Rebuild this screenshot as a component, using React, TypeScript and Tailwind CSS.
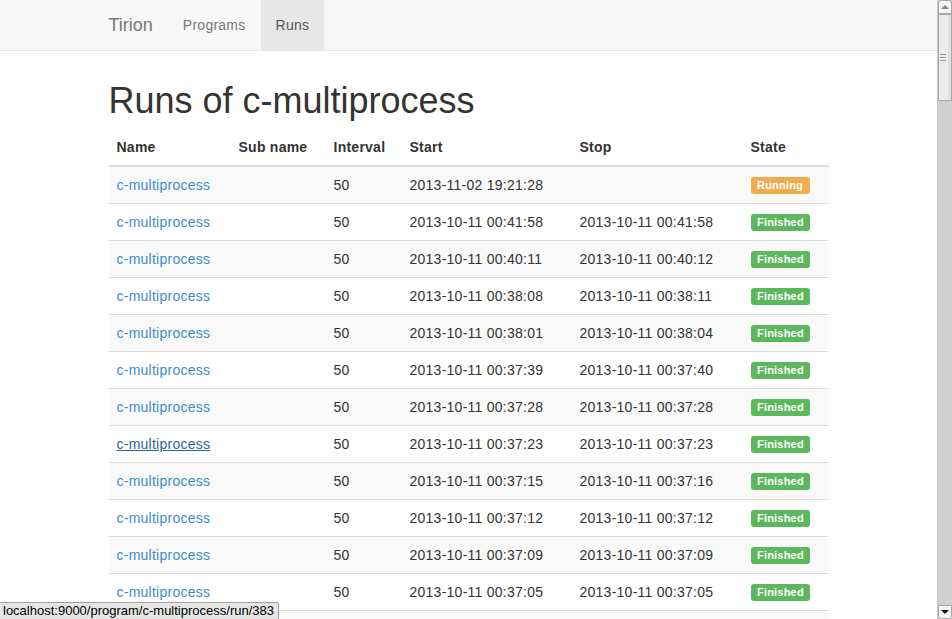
import React from 'react'

type Run = { start: string; stop: string; state: 'Running' | 'Finished' }

const runs: Run[] = [
  { start: '2013-11-02 19:21:28', stop: '', state: 'Running' },
  { start: '2013-10-11 00:41:58', stop: '2013-10-11 00:41:58', state: 'Finished' },
  { start: '2013-10-11 00:40:11', stop: '2013-10-11 00:40:12', state: 'Finished' },
  { start: '2013-10-11 00:38:08', stop: '2013-10-11 00:38:11', state: 'Finished' },
  { start: '2013-10-11 00:38:01', stop: '2013-10-11 00:38:04', state: 'Finished' },
  { start: '2013-10-11 00:37:39', stop: '2013-10-11 00:37:40', state: 'Finished' },
  { start: '2013-10-11 00:37:28', stop: '2013-10-11 00:37:28', state: 'Finished' },
  { start: '2013-10-11 00:37:23', stop: '2013-10-11 00:37:23', state: 'Finished' },
  { start: '2013-10-11 00:37:15', stop: '2013-10-11 00:37:16', state: 'Finished' },
  { start: '2013-10-11 00:37:12', stop: '2013-10-11 00:37:12', state: 'Finished' },
  { start: '2013-10-11 00:37:09', stop: '2013-10-11 00:37:09', state: 'Finished' },
  { start: '2013-10-11 00:37:05', stop: '2013-10-11 00:37:05', state: 'Finished' },
  { start: '2013-10-11 00:36:58', stop: '2013-10-11 00:37:00', state: 'Finished' },
  { start: '2013-10-11 00:36:51', stop: '2013-10-11 00:36:52', state: 'Finished' },
]

// row whose link is under the mouse
const HOVERED = 7

const Navbar: React.FC = () => (
  <div className="h-[51px] bg-[#f8f8f8] border-b border-[#e7e7e7]">
    <div className="w-[750px] mx-auto px-[15px] flex items-stretch h-[50px]">
      <a className="py-[15px] pr-[15px] text-[18px] leading-[20px] text-[#777]">Tirion</a>
      <a className="py-[15px] px-[15px] text-[14px] leading-[20px] tracking-[0.25px] text-[#777]">Programs</a>
      <a className="py-[15px] px-[15px] text-[14px] leading-[20px] tracking-[0.25px] text-[#555] bg-[#e7e7e7]">Runs</a>
    </div>
  </div>
)

const Label: React.FC<{ state: Run['state'] }> = ({ state }) => (
  <span
    className={`inline-block align-middle px-[6.5px] pt-[3px] pb-[3px] rounded-[3px] text-[11px] leading-[11px] font-bold tracking-[0.2px] text-white ${
      state === 'Running' ? 'bg-[#f0ad4e]' : 'bg-[#5cb85c]'
    }`}
  >
    {state}
  </span>
)

const Scrollbar: React.FC = () => (
  <div className="w-[15px] h-full flex flex-col bg-[#d0d0d0] border-l border-[#c8c8c8]">
    <div className="h-[14px] bg-[#f4f4f4] border border-[#a8a8a8] rounded-t-[3px] flex items-center justify-center">
      <div className="w-0 h-0 border-l-[4px] border-r-[4px] border-b-[4px] border-l-transparent border-r-transparent border-b-[#888]" />
    </div>
    <div className="h-[87px] bg-[#ececec] border border-[#a8a8a8] flex">
      <div className="flex-1 flex flex-col items-center justify-center gap-[2px] pr-[2px]">
        <div className="w-[6px] h-px bg-[#999]" />
        <div className="w-[6px] h-px bg-[#999]" />
        <div className="w-[6px] h-px bg-[#999]" />
      </div>
      <div className="w-[3px] bg-[#e0e0e0]" />
    </div>
    <div className="flex-1" />
    <div className="h-[14px] bg-[#f4f4f4] border border-[#a8a8a8] rounded-b-[3px] flex items-center justify-center">
      <div className="w-0 h-0 border-l-[4px] border-r-[4px] border-t-[4px] border-l-transparent border-r-transparent border-t-[#111]" />
    </div>
  </div>
)

export default function App() {
  return (
    <div
      className="relative w-full h-[619px] overflow-hidden flex bg-white text-[#333] text-[14px] leading-[20px]"
      style={{ fontFamily: '"Liberation Sans", Arial, Helvetica, sans-serif' }}
    >
      <div className="flex-1 min-w-0">
        <Navbar />
        <div className="w-[750px] mx-auto px-[15px]">
          <h1 className="mt-[30px] mb-[8px] text-[36px] leading-[39.6px] font-normal text-[#333]">Runs of c-multiprocess</h1>
          <table className="w-[720px] table-fixed border-collapse tracking-[0.25px]">
            <colgroup>
              <col className="w-[122px]" />
              <col className="w-[95px]" />
              <col className="w-[76px]" />
              <col className="w-[170px]" />
              <col className="w-[171px]" />
              <col className="w-[86px]" />
            </colgroup>
            <thead>
              <tr>
                {['Name', 'Sub name', 'Interval', 'Start', 'Stop', 'State'].map((h) => (
                  <th key={h} className="p-2 text-left font-bold border-b-2 border-[#ddd]">
                    {h}
                  </th>
                ))}
              </tr>
            </thead>
            <tbody>
              {runs.map((r, i) => (
                <tr key={i} className={`h-[37px] ${i % 2 === 0 ? 'bg-[#f9f9f9]' : ''}`}>
                  <td className="p-2 border-t border-[#ddd] align-middle">
                    <a className={i === HOVERED ? 'text-[#2a6496] underline' : 'text-[#428bca]'}>
                      c-multiprocess
                    </a>
                  </td>
                  <td className="p-2 border-t border-[#ddd]" />
                  <td className="p-2 border-t border-[#ddd] align-middle">50</td>
                  <td className="p-2 border-t border-[#ddd] align-middle">{r.start}</td>
                  <td className="p-2 border-t border-[#ddd] align-middle">{r.stop}</td>
                  <td className="px-2 py-0 border-t border-[#ddd] align-middle">
                    <Label state={r.state} />
                  </td>
                </tr>
              ))}
            </tbody>
          </table>
        </div>
      </div>
      <Scrollbar />
      <div className="absolute left-0 bottom-0 h-[17px] pl-[3px] pr-[4px] bg-[#e6e6e6] border-t border-r border-[#a0a0a0] rounded-tr-[2px] text-[13px] leading-[16px] text-black">
        localhost:9000/program/c-multiprocess/run/383
      </div>
    </div>
  )
}
